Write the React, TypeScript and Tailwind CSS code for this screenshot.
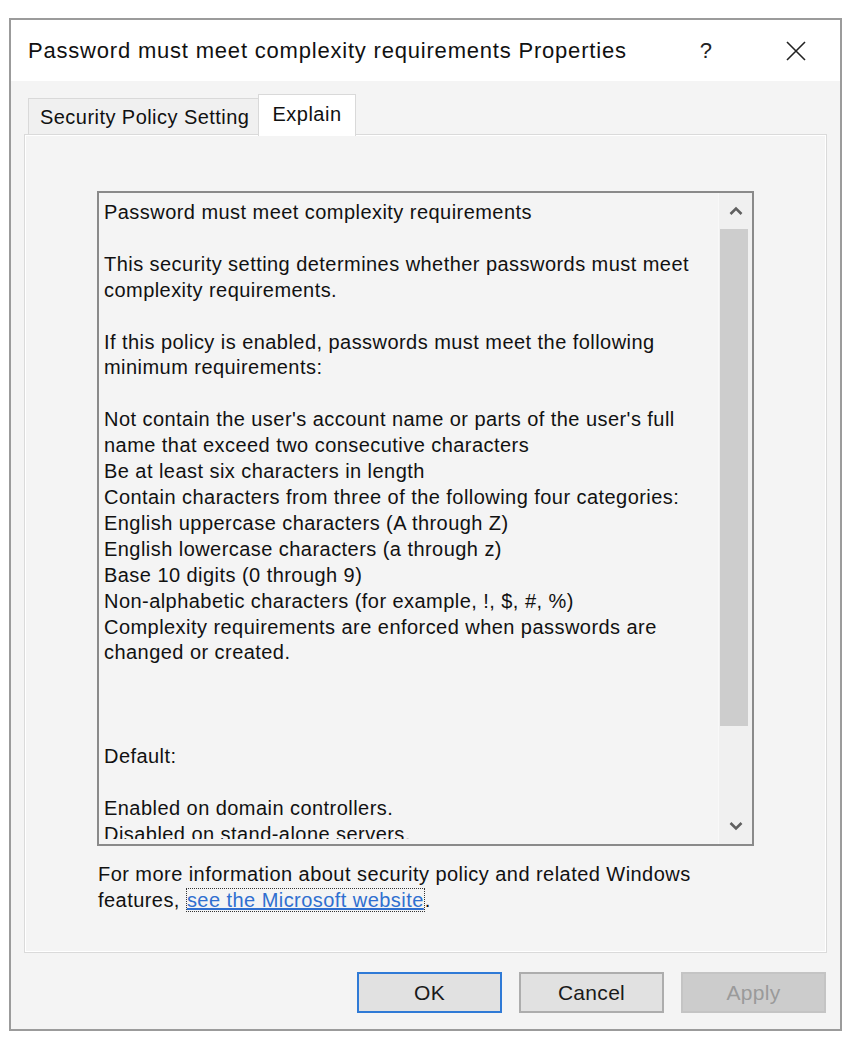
import type { ReactNode } from "react";

const body = `"Liberation Sans", Arial, sans-serif`;

const lines: string[] = [
  "Password must meet complexity requirements",
  "",
  "This security setting determines whether passwords must meet",
  "complexity requirements.",
  "",
  "If this policy is enabled, passwords must meet the following",
  "minimum requirements:",
  "",
  "Not contain the user's account name or parts of the user's full",
  "name that exceed two consecutive characters",
  "Be at least six characters in length",
  "Contain characters from three of the following four categories:",
  "English uppercase characters (A through Z)",
  "English lowercase characters (a through z)",
  "Base 10 digits (0 through 9)",
  "Non-alphabetic characters (for example, !, $, #, %)",
  "Complexity requirements are enforced when passwords are",
  "changed or created.",
  "",
  "",
  "",
  "Default:",
  "",
  "Enabled on domain controllers.",
  "Disabled on stand-alone servers.",
];

function DialogButton({
  children,
  variant = "normal",
}: {
  children: ReactNode;
  variant?: "default" | "normal" | "disabled";
}) {
  const cls =
    variant === "default"
      ? "border-2 border-[#2f7ad6] bg-[#e1e1e1] text-[#1a1a1a]"
      : variant === "disabled"
        ? "border-2 border-[#c4c4c4] bg-[#cccccc] text-[#9a9a9a]"
        : "border-2 border-[#adadad] bg-[#e1e1e1] text-[#1a1a1a]";
  return (
    <button
      type="button"
      className={`flex h-[41px] w-[145px] items-center justify-center text-[21px] tracking-[0.3px] ${cls}`}
      style={{ fontFamily: body }}
    >
      {children}
    </button>
  );
}

export default function App() {
  return (
    <div className="min-h-screen bg-white pl-[9px] pt-[18px]" style={{ fontFamily: body }}>
      <div className="flex h-[1013px] w-[833px] flex-col border-2 border-[#9b9b9b] bg-[#f4f4f4]">
        {/* title bar */}
        <div className="flex h-[61px] shrink-0 items-center bg-white pl-[17px] pr-[34px]">
          <span className="flex-1 text-[22px] tracking-[0.8px] text-[#111]">
            Password must meet complexity requirements Properties
          </span>
          <span className="mr-[74px] text-[22px] text-[#222]">?</span>
          <svg width="20" height="20" viewBox="0 0 20 20" className="text-[#222]">
            <path d="M1 1 L19 19 M19 1 L1 19" stroke="currentColor" strokeWidth="1.6" fill="none" />
          </svg>
        </div>

        {/* body */}
        <div className="flex flex-1 flex-col px-[13px] pt-[13px]">
          {/* tabs */}
          <div className="flex items-end pl-[4px]">
            <div className="-mr-px flex h-[36px] w-[231px] items-center border border-b-0 border-[#d9d9d9] bg-[#f0f0f0] pl-[11px] text-[20px] tracking-[0.45px] text-[#111]">
              Security Policy Setting
            </div>
            <div className="relative z-10 -mb-[2px] flex h-[42px] w-[98px] items-center justify-center border border-b-0 border-[#d9d9d9] bg-white pb-[4px] text-[20px] tracking-[0.5px] text-[#111]">
              Explain
            </div>
          </div>

          {/* tab panel */}
          <div className="flex h-[819px] flex-col border border-[#dadada] bg-[#f4f4f4] pl-[72px] pt-[56px] shadow-[inset_1px_1px_0_#ffffff,inset_-1px_-1px_0_#ffffff]">
            <div className="flex h-[655px] w-[657px] border-2 border-[#8a8a8a] bg-[#f4f4f4]">
              <div className="mb-[5px] flex-1 overflow-hidden pl-[5px] pt-[7px] text-[20px] leading-[25.92px] tracking-[0.45px] text-[#111]">
                {lines.map((l, i) => (
                  <div key={i} className="h-[25.92px] whitespace-nowrap">
                    {l}
                  </div>
                ))}
              </div>
              <div className="flex w-[34px] flex-col border-l border-[#f8f8f8] bg-[#f0f0f0]">
                <div className="flex h-[36px] items-center justify-center">
                  <svg width="14" height="10" viewBox="0 0 14 10">
                    <path d="M1.5 8 L7 2.5 L12.5 8" stroke="#606060" strokeWidth="2.6" fill="none" />
                  </svg>
                </div>
                <div className="ml-[1px] mr-[4px] h-[497px] bg-[#cdcdcd]" />
                <div className="flex-1" />
                <div className="flex h-[36px] items-center justify-center">
                  <svg width="14" height="10" viewBox="0 0 14 10">
                    <path d="M1.5 2 L7 7.5 L12.5 2" stroke="#606060" strokeWidth="2.6" fill="none" />
                  </svg>
                </div>
              </div>
            </div>
            <div className="mt-[15px] pl-[1px] text-[20px] leading-[26px] tracking-[0.45px] text-[#111]">
              <div>For more information about security policy and related Windows</div>
              <div>
                features,{" "}
                <span className="border border-dotted border-[#333] text-[#2f6fd0] underline decoration-[#2f6fd0]">
                  see the Microsoft website
                </span>
                .
              </div>
            </div>
          </div>

          {/* buttons */}
          <div className="mt-[19px] flex justify-end gap-[17px] pr-[1px]">
            <DialogButton variant="default">OK</DialogButton>
            <DialogButton>Cancel</DialogButton>
            <DialogButton variant="disabled">Apply</DialogButton>
          </div>
        </div>
      </div>
    </div>
  );
}
